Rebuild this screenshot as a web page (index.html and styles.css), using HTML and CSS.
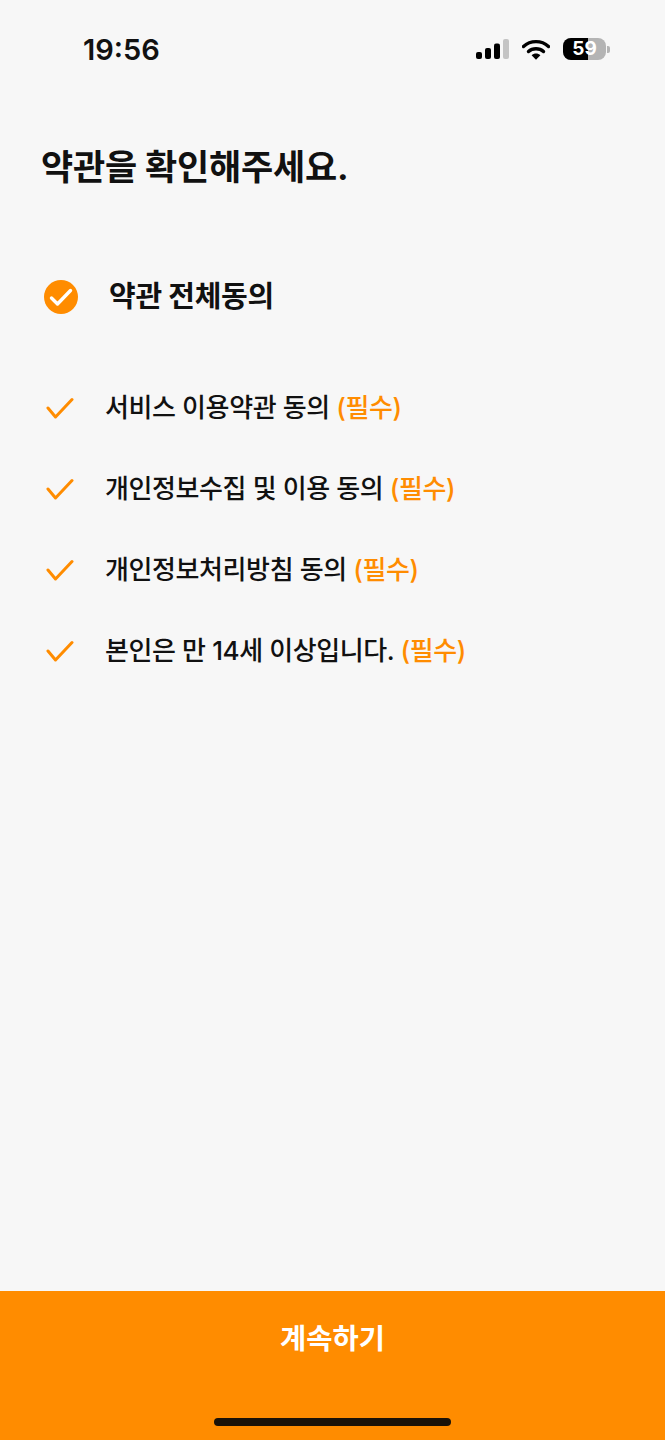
FILE: index.html
```html
<!DOCTYPE html>
<html lang="ko">
<head>
<meta charset="utf-8">
<title>약관</title>
<link rel="stylesheet" href="styles.css">
</head>
<body>
<div class="screen">
  <header class="status">
    <span class="time">19:56</span>
    <div class="status-icons">
      <svg class="signal" width="33" height="21" viewBox="0 0 33 21">
        <rect x="0" y="13" width="6" height="7" rx="2" fill="#000"/>
        <rect x="9" y="9" width="6" height="11" rx="2" fill="#000"/>
        <rect x="18" y="4.500" width="6" height="15.500" rx="2" fill="#000"/>
        <rect x="27" y="0" width="6" height="20" rx="2" fill="#c4c4c4"/>
      </svg>
      <svg class="wifi" width="28" height="21" viewBox="0 0 28 21">
        <path d="M1.5 7.5C8.5 1 19.5 1 26.5 7.5" fill="none" stroke="#000" stroke-width="3.4" stroke-linecap="round"/>
        <path d="M6.5 12.5C10.5 8.8 17.5 8.8 21.5 12.5" fill="none" stroke="#000" stroke-width="3.4" stroke-linecap="round"/>
        <path d="M9.6 16.2C12 14 16 14 18.400 16.200L14 20.800Z" fill="#000"/>
      </svg>
      <div class="battery">
        <div class="battery-body"><div class="battery-fill"></div><span class="battery-num">59</span></div>
        <div class="battery-cap"></div>
      </div>
    </div>
  </header>

  <main class="content">
    <h1 class="title">약관을 확인해주세요.</h1>
    <div class="all-row">
      <svg class="all-icon" width="34" height="34" viewBox="0 0 34 34">
        <circle cx="17" cy="17" r="17" fill="#ff8c00"/>
        <path d="M7.500 18L13.500 24L26.500 10.500" fill="none" stroke="#fff" stroke-width="3.400" stroke-linecap="round" stroke-linejoin="round"/>
      </svg>
      <span class="all-label">약관 전체동의</span>
    </div>
    <ul class="terms">
      <li class="term">
        <svg class="check" width="28" height="22" viewBox="0 0 28 22"><path d="M2 11L9.500 20L26 2.500" fill="none" stroke="#ff8c00" stroke-width="3" stroke-linecap="round" stroke-linejoin="round"/></svg>
        <span class="term-text">서비스 이용약관 동의 <em class="req">(필수)</em></span>
      </li>
      <li class="term">
        <svg class="check" width="28" height="22" viewBox="0 0 28 22"><path d="M2 11L9.500 20L26 2.500" fill="none" stroke="#ff8c00" stroke-width="3" stroke-linecap="round" stroke-linejoin="round"/></svg>
        <span class="term-text">개인정보수집 및 이용 동의 <em class="req">(필수)</em></span>
      </li>
      <li class="term">
        <svg class="check" width="28" height="22" viewBox="0 0 28 22"><path d="M2 11L9.500 20L26 2.500" fill="none" stroke="#ff8c00" stroke-width="3" stroke-linecap="round" stroke-linejoin="round"/></svg>
        <span class="term-text">개인정보처리방침 동의 <em class="req">(필수)</em></span>
      </li>
      <li class="term">
        <svg class="check" width="28" height="22" viewBox="0 0 28 22"><path d="M2 11L9.500 20L26 2.500" fill="none" stroke="#ff8c00" stroke-width="3" stroke-linecap="round" stroke-linejoin="round"/></svg>
        <span class="term-text">본인은 만 14세 이상입니다. <em class="req">(필수)</em></span>
      </li>
    </ul>
  </main>

  <footer class="cta">
    <span class="cta-label">계속하기</span>
    <div class="home-bar"></div>
  </footer>
</div>
</body>
</html>
```
FILE: styles.css
```css
* { box-sizing: border-box; }
html, body { margin: 0; padding: 0; }
body {
  width: 665px;
  height: 1440px;
  overflow: hidden;
  background: #f7f7f7;
  font-family: "Inter", "Noto Sans CJK KR", sans-serif;
  color: #111;
}
.screen {
  height: 1440px;
  display: flex;
  flex-direction: column;
}
.status {
  height: 100px;
  flex: none;
  display: flex;
  justify-content: space-between;
  align-items: flex-start;
  padding: 31px 55px 0 83px;
}
.time {
  font-size: 29px;
  line-height: 38px;
  font-weight: 600;
  color: #111;
}
.status-icons {
  display: flex;
  align-items: center;
  gap: 13px;
  padding-top: 7px;
}
.signal, .wifi { display: block; }
.battery {
  display: flex;
  align-items: center;
  gap: 1px;
}
.battery-body {
  position: relative;
  width: 43px;
  height: 22px;
  border-radius: 8px;
  background: #b4b4b4;
  overflow: hidden;
}
.battery-fill {
  height: 100%;
  width: 59%;
  background: #000;
}
.battery-num {
  position: absolute;
  inset: 0;
  text-align: center;
  color: #fff;
  font-size: 19px;
  line-height: 22px;
  font-weight: 700;
}
.battery-cap {
  width: 3px;
  height: 7px;
  border-radius: 0 2px 2px 0;
  background: #b4b4b4;
}
.content {
  flex: 1;
  padding: 0 0 0 41px;
}
.title {
  margin: 43px 0 0;
  font-size: 35px;
  line-height: 48px;
  font-weight: 700;
  letter-spacing: -0.2px;
  color: #111;
}
.all-row {
  display: flex;
  align-items: center;
  margin: 86px 0 0 3px;
  height: 40px;
}
.all-icon { flex: none; display: block; }
.all-label {
  margin-left: 31px;
  font-size: 29px;
  line-height: 40px;
  font-weight: 700;
  letter-spacing: -0.3px;
  color: #111;
}
.terms {
  list-style: none;
  margin: 71px 0 0 5px;
  padding: 0;
  display: flex;
  flex-direction: column;
  gap: 41px;
}
.term {
  display: flex;
  align-items: center;
  height: 40px;
}
.check { flex: none; display: block; }
.term-text {
  margin-left: 31px;
  font-size: 26px;
  line-height: 40px;
  font-weight: 500;
  letter-spacing: -0.4px;
  color: #111;
}
.req {
  font-style: normal;
  color: #ff8c00;
}
.cta {
  position: relative;
  flex: none;
  height: 149px;
  background: #ff8c00;
  display: flex;
  justify-content: center;
  padding-top: 27px;
}
.cta-label {
  font-size: 28.500px;
  line-height: 42px;
  font-weight: 700;
  color: #fff;
}
.home-bar {
  position: absolute;
  left: 214px;
  top: 127px;
  width: 237px;
  height: 8px;
  border-radius: 4px;
  background: #1a1208;
}
```
